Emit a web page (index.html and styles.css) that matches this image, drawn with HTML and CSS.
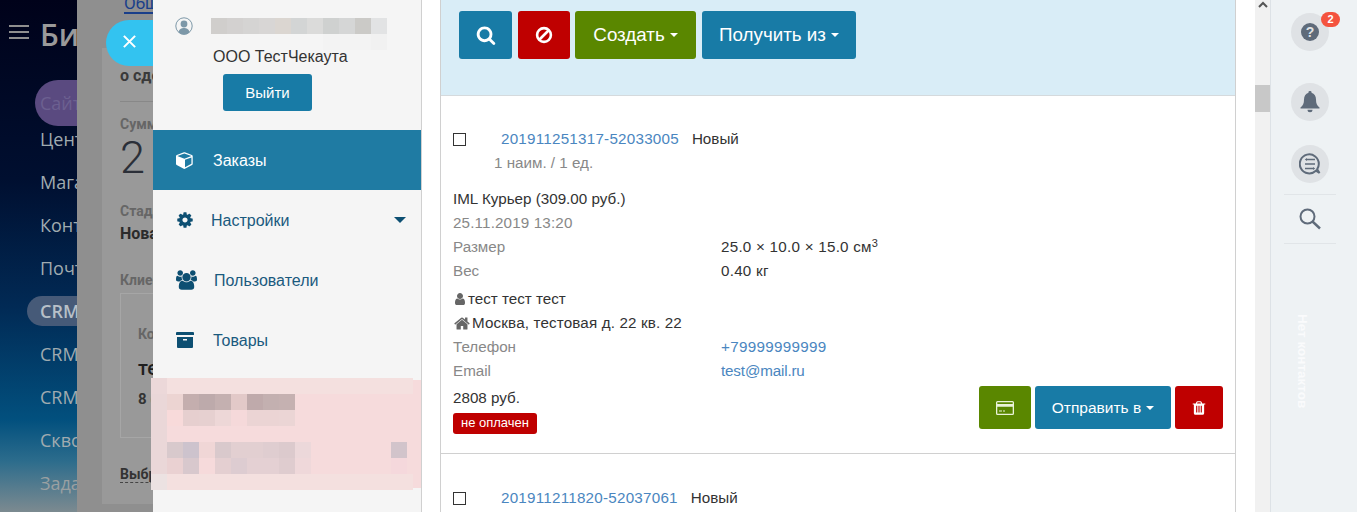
FILE: index.html
```html
<!DOCTYPE html>
<html lang="en">
<head>
    <meta charset="UTF-8">
    <title>Заказы</title>
    <link rel="stylesheet" href="styles.css">
</head>
<body>
    <nav class="portal-nav">
        <div class="portal-head">
            <div class="burger"><span></span><span></span><span></span></div>
            <span class="portal-logo">Битрикс</span>
        </div>
        <div class="portal-pill pill-site">Сайты</div>
        <div class="portal-item">Центр</div>
        <div class="portal-item">Магазин</div>
        <div class="portal-item">Контакты</div>
        <div class="portal-item">Почта</div>
        <div class="portal-item item-current"><span>CRM</span></div>
        <div class="portal-item">CRM</div>
        <div class="portal-item">CRM</div>
        <div class="portal-item">Сквозная</div>
        <div class="portal-item item-dim">Задачи</div>
    </nav>

    <section class="slider">
        <div class="slider-top"><span class="slider-tab">Общие</span></div>
        <div class="slider-body">
            <div class="slider-title">о сделке</div>
            <div class="slider-label label-sum">Сумма</div>
            <div class="slider-sum">2 808</div>
            <div class="slider-label label-stage">Стадия</div>
            <div class="slider-value">Новая</div>
            <div class="slider-label label-client">Клиент</div>
            <div class="slider-card">
                <div class="slider-label">Контакт</div>
                <div class="slider-name">тест</div>
                <div class="slider-phone">8 (999)</div>
            </div>
            <div class="slider-choose"><span>Выбрать</span></div>
        </div>
    </section>

    <button class="close-pill">
        <svg viewBox="0 0 16 16" width="15" height="15"><path d="M2 2l12 12M14 2L2 14" stroke="#fff" stroke-width="2.2"/></svg>
    </button>

    <aside class="sidebar">
        <div class="profile">
            <div class="profile-line">
                <svg class="avatar" viewBox="0 0 18 18" width="18" height="18">
                    <circle cx="9" cy="9" r="8.2" fill="#f5f5f5" stroke="#7d98a8" stroke-width="1"/>
                    <circle cx="9" cy="7" r="3.4" fill="#7d98a8"/>
                    <path d="M3.5 15.5c.5-3.5 3-4.5 5.5-4.5s5 1 5.5 4.5a8 8 0 0 1-11 0z" fill="#7d98a8"/>
                </svg>
                <svg class="mosaic-name" viewBox="0 0 176 32" width="176" height="32">
                    <rect x="0" width="16" height="16" fill="#d0cecc"/><rect x="16" width="16" height="16" fill="#d3d1d0"/>
                    <rect x="32" width="16" height="16" fill="#d5d4d3"/><rect x="48" width="16" height="16" fill="#d8d6d5"/>
                    <rect x="64" width="16" height="16" fill="#dbd6d1"/><rect x="80" width="16" height="16" fill="#d3d5d5"/>
                    <rect x="96" width="16" height="16" fill="#dbdbda"/><rect x="112" width="16" height="16" fill="#cfd1d0"/>
                    <rect x="128" width="16" height="16" fill="#d5d6d6"/><rect x="144" width="16" height="16" fill="#cbcac7"/>
                    <rect x="160" width="16" height="16" fill="#e2e3e4"/>
                    <rect x="112" y="16" width="48" height="16" fill="#f3f3f3"/><rect x="160" y="16" width="16" height="16" fill="#f1f1f1"/>
                </svg>
            </div>
            <div class="company">ООО ТестЧекаута</div>
            <button class="btn btn-blue logout">Выйти</button>
        </div>
        <ul class="menu">
            <li class="menu-item active">
                <svg class="menu-icon" viewBox="0 0 1792 1792" width="18" height="18"><path d="M896 1629l640-349v-636l-640 233v752zm-64-865l698-254-698-254-698 254zm832-252v768q0 35-18 65t-49 47l-704 384q-28 16-61 16t-61-16l-704-384q-31-17-49-47t-18-65v-768q0-40 23-73t61-47l704-256q22-8 44-8t44 8l704 256q38 14 61 47t23 73z" fill="#fff"/><path d="M240 640l592 216v690l-592-320z" fill="#fff"/></svg>
                <span class="menu-text text-orders">Заказы</span>
            </li>
            <li class="menu-item">
                <svg class="menu-icon" viewBox="0 0 1792 1792" width="18" height="18"><path d="M1152 896q0-106-75-181t-181-75-181 75-75 181 75 181 181 75 181-75 75-181zm512-109v222q0 12-8 23t-20 13l-185 28q-19 54-39 91 35 50 107 138 10 12 10 25t-9 23q-27 37-99 108t-94 71q-12 0-26-9l-138-108q-44 23-91 38-16 136-29 186-7 28-36 28h-222q-14 0-24.5-8.5t-11.5-21.5l-28-184q-49-16-90-37l-141 107q-10 9-25 9-14 0-25-11-126-114-165-168-7-10-7-23 0-12 8-23 15-21 51-66.5t54-70.5q-27-50-41-99l-183-27q-13-2-21-12.5t-8-23.5v-222q0-12 8-23t19-13l186-28q14-46 39-92-40-57-107-138-10-12-10-24 0-10 9-23 26-36 98.5-107.5t94.5-71.5q13 0 26 10l138 107q44-23 91-38 16-136 29-186 7-28 36-28h222q14 0 24.5 8.5t11.5 21.5l28 184q49 16 90 37l142-107q9-9 24-9 13 0 25 10 129 119 165 170 7 8 7 22 0 12-8 23-15 21-51 66.5t-54 70.5q26 50 41 98l183 28q13 2 21 12.5t8 23.5z" fill="#0d4f72"/></svg>
                <span class="menu-text text-settings">Настройки</span>
                <span class="menu-caret"></span>
            </li>
            <li class="menu-item">
                <svg class="menu-icon" viewBox="0 0 1920 1792" width="21" height="20"><path d="M593 896q-162 5-265 128h-134q-82 0-138-40.5t-56-118.5q0-353 124-353 6 0 43.5 21t97.5 42.5 119 21.5q67 0 133-23-5 37-5 66 0 139 81 256zm1071 637q0 120-73 189.5t-194 69.5h-874q-121 0-194-69.5t-73-189.5q0-53 3.5-103.5t14-109 26.5-108.5 43-97.5 62-81 85.5-53.5 111.5-20q10 0 43 21.5t73 48 107 48 135 21.5 135-21.5 107-48 73-48 43-21.5q61 0 111.5 20t85.5 53.5 62 81 43 97.5 26.5 108.5 14 109 3.5 103.5zm-1024-1277q0 106-75 181t-181 75-181-75-75-181 75-181 181-75 181 75 75 181zm704 384q0 159-112.5 271.5t-271.5 112.5-271.5-112.5-112.5-271.5 112.5-271.5 271.5-112.5 271.5 112.5 112.5 271.5zm576 225q0 78-56 118.5t-138 40.5h-134q-103-123-265-128 81-117 81-256 0-29-5-66 66 23 133 23 59 0 119-21.5t97.5-42.5 43.5-21q124 0 124 353zm-128-609q0 106-75 181t-181 75-181-75-75-181 75-181 181-75 181 75 75 181z" fill="#0d4f72"/></svg>
                <span class="menu-text text-users">Пользователи</span>
            </li>
            <li class="menu-item">
                <svg class="menu-icon" viewBox="0 0 18 16" width="18" height="16"><path d="M1 0h16a1 1 0 0 1 1 1v2H0V1a1 1 0 0 1 1-1zM1 5h16v10a1 1 0 0 1-1 1H2a1 1 0 0 1-1-1zm6 2v1.5h4V7z" fill="#0d4f72" fill-rule="evenodd"/></svg>
                <span class="menu-text text-goods">Товары</span>
            </li>
        </ul>
    </aside>

    <svg class="mosaic-block" viewBox="0 0 270 115" width="270" height="115">
        <rect x="16" y="2" width="254" height="108" fill="#f6dbdc"/>
        <rect x="0" y="0" width="262" height="16" fill="#f4e0df"/>
        <rect x="0" y="16" width="16" height="80" fill="#ead7d8"/>
        <rect x="0" y="96" width="262" height="16" fill="#f4e0df"/>
        <rect x="0" y="0" width="16" height="16" fill="#ecd8d9"/>
        <rect x="0" y="96" width="16" height="16" fill="#ece2e2"/>
        <g>
            <rect x="16" y="16" width="16" height="16" fill="#ecd4d2"/><rect x="32" y="16" width="16" height="16" fill="#c4aeae"/>
            <rect x="48" y="16" width="16" height="16" fill="#bdaaab"/><rect x="64" y="16" width="16" height="16" fill="#c4b0b0"/>
            <rect x="80" y="16" width="16" height="16" fill="#e2c9c8"/><rect x="96" y="16" width="16" height="16" fill="#bfaaab"/>
            <rect x="112" y="16" width="16" height="16" fill="#c3b0b0"/><rect x="128" y="16" width="16" height="16" fill="#c5b1b1"/>
            <rect x="16" y="32" width="16" height="16" fill="#f8dada"/><rect x="32" y="32" width="16" height="16" fill="#e6cfcf"/>
            <rect x="48" y="32" width="16" height="16" fill="#e6d0d0"/><rect x="64" y="32" width="16" height="16" fill="#edd7d7"/>
            <rect x="80" y="32" width="16" height="16" fill="#f5d9da"/><rect x="96" y="32" width="16" height="16" fill="#ebd4d4"/>
            <rect x="112" y="32" width="16" height="16" fill="#ebd4d4"/><rect x="128" y="32" width="16" height="16" fill="#ebd5d5"/>
            <rect x="16" y="64" width="16" height="16" fill="#d8c9cc"/><rect x="32" y="64" width="16" height="16" fill="#cdc3cd"/>
            <rect x="48" y="64" width="16" height="16" fill="#f0d6d6"/><rect x="64" y="64" width="16" height="16" fill="#d9c9cc"/>
            <rect x="80" y="64" width="16" height="16" fill="#e2cfd1"/><rect x="96" y="64" width="16" height="16" fill="#e2cfd1"/>
            <rect x="112" y="64" width="16" height="16" fill="#dfcdd0"/><rect x="128" y="64" width="16" height="16" fill="#dccacd"/>
            <rect x="144" y="64" width="16" height="16" fill="#ecd8da"/><rect x="240" y="64" width="16" height="16" fill="#d2c4cb"/>
            <rect x="16" y="80" width="16" height="16" fill="#ead1d2"/><rect x="32" y="80" width="16" height="16" fill="#d8c8cd"/>
            <rect x="48" y="80" width="16" height="16" fill="#f6dadb"/><rect x="64" y="80" width="16" height="16" fill="#e4cfd1"/>
            <rect x="80" y="80" width="16" height="16" fill="#ddccd1"/><rect x="96" y="80" width="16" height="16" fill="#e4d0d3"/>
            <rect x="112" y="80" width="16" height="16" fill="#e4d0d3"/><rect x="128" y="80" width="16" height="16" fill="#dfcccf"/>
            <rect x="144" y="80" width="16" height="16" fill="#efd8da"/><rect x="240" y="80" width="16" height="16" fill="#f5d8dc"/>
        </g>
    </svg>

    <main class="content">
        <div class="panel">
            <div class="toolbar">
                <button class="btn btn-blue btn-search">
                    <svg viewBox="0 0 1792 1792" width="20" height="20"><path d="M1216 832q0-185-131.5-316.5t-316.5-131.5-316.5 131.5-131.5 316.5 131.5 316.5 316.5 131.5 316.5-131.5 131.5-316.5zm512 832q0 52-38 90t-90 38q-54 0-90-38l-343-342q-179 124-399 124-143 0-273.5-55.5t-225-150-150-225-55.5-273.5 55.5-273.5 150-225 225-150 273.5-55.5 273.5 55.5 225 150 150 225 55.5 273.5q0 220-124 399l343 343q37 37 37 90z" fill="#fff"/></svg>
                </button>
                <button class="btn btn-red btn-ban">
                    <svg viewBox="0 0 18 18" width="18" height="18"><circle cx="9" cy="9" r="6.9" fill="none" stroke="#fff" stroke-width="2.6"/><path d="M4.500 13.500l9-9" stroke="#fff" stroke-width="2.600"/></svg>
                </button>
                <button class="btn btn-green btn-create">Создать <span class="caret"></span></button>
                <button class="btn btn-blue btn-get">Получить из <span class="caret"></span></button>
            </div>

            <article class="order">
                <div class="order-head">
                    <span class="check"></span>
                    <a class="link order-num">201911251317-52033005</a>
                    <span class="order-status">Новый</span>
                </div>
                <div class="order-count">1 наим. / 1 ед.</div>
                <div class="row row-delivery">IML Курьер (309.00 руб.)</div>
                <div class="row muted row-date">25.11.2019 13:20</div>
                <div class="row"><span class="row-label">Размер</span><span class="row-size">25.0 × 10.0 × 15.0 см<sup>3</sup></span></div>
                <div class="row"><span class="row-label">Вес</span><span class="row-size">0.40 кг</span></div>
                <div class="person person-first">
                    <svg viewBox="0 0 1792 1792" width="14" height="14"><path d="M1536 1399q0 109-62.5 187t-150.5 78h-854q-88 0-150.5-78t-62.5-187q0-85 8.5-160.5t31.5-152 58.5-131 94-89 134.5-34.5q131 128 313 128t313-128q76 0 134.5 34.5t94 89 58.5 131 31.5 152 8.5 160.5zm-256-887q0 159-112.5 271.5t-271.5 112.5-271.5-112.5-112.5-271.5 112.5-271.5 271.5-112.5 271.5 112.5 112.5 271.500z" fill="#666"/></svg>
                    <span>тест тест тест</span>
                </div>
                <div class="person person-home">
                    <svg viewBox="0 0 1792 1792" width="18" height="17"><path d="M1472 992v480q0 26-19 45t-45 19h-384v-384h-256v384h-384q-26 0-45-19t-19-45v-480q0-1 .5-3t.5-3l575-474 575 474q1 2 1 6zm223-69l-62 74q-8 9-21 11h-3q-13 0-21-7l-692-577-692 577q-12 8-24 7-13-2-21-11l-62-74q-8-10-7-23.5t11-21.5l719-599q32-26 76-26t76 26l244 204v-195q0-14 9-23t23-9h192q14 0 23 9t9 23v408l219 182q10 8 11 21.5t-7 23.5z" fill="#666"/></svg>
                    <span>Москва, тестовая д. 22 кв. 22</span>
                </div>
                <div class="row"><span class="row-label">Телефон</span><a class="link link-phone">+79999999999</a></div>
                <div class="row"><span class="row-label">Email</span><a class="link link-mail">test@mail.ru</a></div>
                <div class="order-foot">
                    <div class="order-sum">
                        <div class="price">2808 руб.</div>
                        <span class="badge">не оплачен</span>
                    </div>
                    <div class="order-actions">
                        <button class="btn btn-green btn-pay">
                            <svg viewBox="0 0 18 14" width="18" height="14"><path d="M1.500 0h15A1.500 1.500 0 0 1 18 1.500v11a1.500 1.500 0 0 1-1.500 1.500h-15A1.500 1.500 0 0 1 0 12.500v-11A1.500 1.500 0 0 1 1.500 0zM1.300 1.300v1.700h15.400V1.300zm0 4.400v7h15.400v-7zM3 9.500h3v1H3zm4 0h2v1H7z" fill="#eaf3d8" fill-rule="evenodd"/></svg>
                        </button>
                        <button class="btn btn-blue btn-send">Отправить в <span class="caret"></span></button>
                        <button class="btn btn-red btn-trash">
                            <svg viewBox="0 0 1792 1792" width="16" height="16"><path d="M704 1376v-704q0-14-9-23t-23-9h-64q-14 0-23 9t-9 23v704q0 14 9 23t23 9h64q14 0 23-9t9-23zm256 0v-704q0-14-9-23t-23-9h-64q-14 0-23 9t-9 23v704q0 14 9 23t23 9h64q14 0 23-9t9-23zm256 0v-704q0-14-9-23t-23-9h-64q-14 0-23 9t-9 23v704q0 14 9 23t23 9h64q14 0 23-9t9-23zm-544-992h448l-48-117q-7-9-17-11h-317q-10 2-17 11zm928 32v64q0 14-9 23t-23 9h-96v948q0 83-47 143.5t-113 60.5h-832q-66 0-113-58.5t-47-141.5v-952h-96q-14 0-23-9t-9-23v-64q0-14 9-23t23-9h309l70-167q15-37 54-63t79-26h320q40 0 79 26t54 63l70 167h309q14 0 23 9t9 23z" fill="#fff"/></svg>
                        </button>
                    </div>
                </div>
            </article>

            <article class="order">
                <div class="order-head">
                    <span class="check"></span>
                    <a class="link order-num">201911211820-52037061</a>
                    <span class="order-status">Новый</span>
                </div>
            </article>
        </div>
    </main>

    <div class="scrollbar">
        <svg class="scroll-up" viewBox="0 0 10 7" width="10" height="7"><path d="M1 6l4-4 4 4" fill="none" stroke="#555" stroke-width="2"/></svg>
        <div class="scroll-thumb"></div>
    </div>

    <aside class="rightbar">
        <div class="round-btn round-help">
            <span class="help-mark">?</span>
            <span class="help-count">2</span>
        </div>
        <div class="round-btn round-bell">
            <svg viewBox="0 0 20 22" width="20" height="22"><path d="M10 0a1.500 1.500 0 0 1 1.500 1.800c3 .8 4.500 3.400 4.500 6.700 0 4 1 6 3.500 8v1H.5v-1C3 14.500 4 12.500 4 8.500c0-3.300 1.500-5.900 4.500-6.700A1.500 1.500 0 0 1 10 0zM7.500 18.800h5a2.500 2.500 0 0 1-5 0z" fill="#5f6b7a"/></svg>
        </div>
        <div class="round-btn round-chat">
            <svg viewBox="0 0 22 22" width="22" height="22"><path d="M20.500 20l-3.600-2.300A9.500 9.500 0 1 1 19.800 11c0 2-.6 3.800-1.600 5.200z" fill="none" stroke="#5f6b7a" stroke-width="2"/><path d="M8 6.500h8M6 11h10M6 15.500h8" stroke="#5f6b7a" stroke-width="1.400"/><path d="M8 5v3l-2.200-1.500zM14 14v3l2.200-1.500z" fill="#5f6b7a"/></svg>
        </div>
        <div class="search-row">
            <svg viewBox="0 0 22 22" width="22" height="22"><circle cx="8.500" cy="8.500" r="7" fill="none" stroke="#5f6b7a" stroke-width="2"/><path d="M13.500 13.500l7.500 7" stroke="#5f6b7a" stroke-width="2.400"/></svg>
        </div>
        <div class="no-contacts">Нет контактов</div>
    </aside>
</body>
</html>
```

FILE: styles.css
```css
* {
    box-sizing: border-box;
    margin: 0;
    padding: 0;
}
body {
    font-family: 'Liberation Sans', Arial, sans-serif;
    font-size: 15.2px;
    color: #333333;
    display: flex;
    height: 100vh;
    overflow: hidden;
    position: relative;
    background-color: #FFFFFF;
}
button {
    font-family: inherit;
    border: none;
}

/* dimmed portal menu on the far left */
.portal-nav {
    width: 77px;
    flex: none;
    overflow: hidden;
    white-space: nowrap;
    font-family: 'Open Sans', sans-serif;
    font-size: 18px;
    color: #a0abb0;
    background: linear-gradient(180deg, #00021A 0%, #000F30 35%, #012A55 60%, #02507E 82%, #2C6C8C 90%, #7C8A90 100%);
}
.portal-head {
    display: flex;
    align-items: center;
    height: 68px;
    padding-left: 9px;
}
.burger {
    width: 20px;
    margin-right: 11px;
    flex: none;
}
.burger span {
    display: block;
    height: 2px;
    margin-bottom: 4px;
    background-color: #8f8f8f;
}
.portal-logo {
    font-size: 30px;
    font-weight: 600;
    color: #9a9a9a;
}
.portal-pill {
    height: 46px;
    line-height: 46px;
    margin: 12px 0 -8px 35px;
    padding-left: 5px;
    border-radius: 23px 0 0 23px;
    background-color: #5A4A80;
    color: #6C6090;
}
.portal-item {
    height: 43px;
    line-height: 43px;
    padding-left: 40px;
}
.item-current {
    padding-top: 6px;
}
.item-current span {
    display: block;
    height: 30px;
    line-height: 30px;
    margin-left: -13px;
    padding-left: 13px;
    border-radius: 15px 0 0 15px;
    font-weight: 600;
    background-color: #465A78;
    color: #B8C0C8;
}
.item-dim {
    color: #9aa0a2;
}

/* grey slider behind the sidebar */
.slider {
    width: 76px;
    flex: none;
    overflow: hidden;
    white-space: nowrap;
    background-color: #8F8F8F;
    font-family: 'Roboto', sans-serif;
    color: #333333;
}
.slider-top {
    height: 48px;
    padding-left: 47px;
}
.slider-tab {
    display: block;
    height: 14px;
    line-height: 6px;
    font-size: 17px;
    color: #1A3F8A;
    border-bottom: 2px solid #1A3F8A;
}
.slider-body {
    height: 456px;
    margin-left: 25px;
    padding-left: 18px;
    background-color: #999999;
}
.slider-title {
    height: 54px;
    padding: 18px 0 0;
    font-size: 16px;
    font-weight: 700;
    color: #3a3a3a;
    border-bottom: 1px solid #888888;
}
.slider-label {
    font-size: 14px;
    font-weight: 700;
    color: #666666;
}
.label-sum {
    margin-top: 14px;
}
.slider-sum {
    font-size: 45px;
    line-height: 50px;
    font-weight: 300;
    margin-top: 1px;
    color: #2b2f38;
}
.label-stage {
    margin-top: 20px;
}
.slider-value {
    font-size: 16px;
    font-weight: 700;
    margin-top: 5px;
    color: #2b2b2b;
}
.label-client {
    margin-top: 29px;
}
.slider-card {
    height: 145px;
    margin-top: 5px;
    padding: 32px 0 0 17px;
    border: 1px solid #A6A6A6;
    border-right: none;
}
.slider-name {
    font-size: 20px;
    font-weight: 500;
    margin-top: 14px;
    color: #1f1f1f;
}
.slider-phone {
    font-size: 15px;
    font-weight: 700;
    margin-top: 10px;
}
.slider-choose {
    margin-top: 28px;
    font-size: 14px;
    font-weight: 700;
}
.slider-choose span {
    border-bottom: 1px dashed #444444;
}
.close-pill {
    position: absolute;
    left: 106px;
    top: 20px;
    width: 47px;
    height: 46px;
    padding-right: 1px;
    border-radius: 23px 0 0 23px;
    background-color: #33C3F0;
}

/* orders sidebar */
.sidebar {
    width: 269px;
    flex: none;
    background-color: #F5F5F5;
    border-right: 1px solid #D0D0D0;
}
.profile {
    height: 130px;
    padding-top: 17px;
}
.profile-line {
    display: flex;
    height: 32px;
    padding-left: 22px;
}
.avatar {
    flex: none;
}
.mosaic-name {
    flex: none;
    margin: 1px 0 0 18px;
}
.company {
    margin: 0 0 0 60px;
    line-height: 16px;
    font-size: 16px;
    color: #333333;
}
.logout {
    display: block;
    width: 89px;
    height: 37px;
    margin: 9px 0 0 70px;
    font-size: 15px;
    color: #FFFFFF;
}
.menu {
    list-style: none;
}
.menu-item {
    display: flex;
    align-items: center;
    height: 60px;
    padding-left: 23px;
    color: #1A5A7E;
    font-size: 16px;
    position: relative;
}
.menu-item.active {
    background-color: #1F7BA3;
    color: #FFFFFF;
}
.menu-icon {
    flex: none;
}
.menu-text {
    padding-top: 2px;
}
.text-orders {
    margin-left: 19px;
}
.text-settings {
    margin-left: 17px;
}
.text-users {
    margin-left: 17px;
}
.text-goods {
    margin-left: 19px;
}
.menu-caret {
    margin-left: auto;
    margin-right: 15px;
    border-left: 6px solid transparent;
    border-right: 6px solid transparent;
    border-top: 6px solid #0D4F72;
}
.mosaic-block {
    position: absolute;
    left: 151px;
    top: 378px;
}

/* main column with orders */
.content {
    width: 833px;
    flex: none;
    padding-left: 18px;
    overflow: hidden;
}
.panel {
    width: 796px;
    height: 100%;
    border-left: 1px solid #D0D0D0;
    border-right: 1px solid #D0D0D0;
}
.toolbar {
    display: flex;
    align-items: flex-start;
    height: 96px;
    padding: 11px 0 0 18px;
    background-color: #D9EDF7;
    border-bottom: 1px solid #D5DADD;
}
.btn {
    display: inline-flex;
    align-items: center;
    justify-content: center;
    border-radius: 3px;
    color: #FFFFFF;
    white-space: nowrap;
}
.btn-blue {
    background-color: #187BA6;
}
.btn-red {
    background-color: #BF0000;
}
.btn-green {
    background-color: #5A8700;
}
.toolbar .btn {
    height: 48px;
    font-size: 18.8px;
}
.btn-search {
    width: 53px;
}
.btn-ban {
    width: 52px;
    margin-left: 6px;
}
.btn-create {
    width: 121px;
    margin-left: 5px;
}
.btn-get {
    width: 154px;
    margin-left: 6px;
}
.caret {
    display: inline-block;
    margin-left: 5px;
    border-left: 4px solid transparent;
    border-right: 4px solid transparent;
    border-top: 4px solid #FFFFFF;
}
.order {
    padding: 24px 12px 0;
    border-bottom: 1px solid #D0D0D0;
}
.order:last-child {
    border-bottom: none;
    padding-top: 25px;
}
.order-head {
    display: flex;
    align-items: center;
    height: 24px;
    line-height: 24px;
    margin-top: 7px;
}
.check {
    width: 13px;
    height: 13px;
    border: 1px solid #333333;
    flex: none;
}
.link {
    color: #4A86C0;
}
.order-num {
    margin-left: 35px;
    letter-spacing: 0.24px;
}
.link-phone {
    letter-spacing: 0.3px;
}
.link-mail {
    letter-spacing: -0.15px;
}
.order-status {
    margin-left: 13px;
}
.order-count {
    line-height: 24px;
    margin-left: 41px;
    color: #888888;
}
.row {
    display: flex;
    line-height: 24px;
    height: 24px;
}
.row-delivery {
    margin-top: 12px;
}
.row-date {
    letter-spacing: 0.15px;
}
.row-size {
    letter-spacing: 0.25px;
}
.muted {
    color: #888888;
}
.row-label {
    width: 268px;
    flex: none;
    color: #888888;
}
.row sup {
    font-size: 11px;
    line-height: 0;
    position: relative;
    top: 1px;
}
.person {
    display: flex;
    align-items: center;
    gap: 1px;
    height: 24px;
    line-height: 24px;
}
.person-first {
    margin-top: 4px;
}
.person-home span {
    letter-spacing: 0.15px;
}
.person svg {
    flex: none;
}
.order-foot {
    display: flex;
    justify-content: space-between;
    height: 67px;
    margin-top: 3px;
}
.price {
    line-height: 24px;
}
.badge {
    display: block;
    width: 84px;
    height: 21px;
    line-height: 20px;
    margin-top: 3px;
    border-radius: 3px;
    text-align: center;
    font-size: 13px;
    color: #FFFFFF;
    background-color: #BF0000;
}
.order-actions {
    display: flex;
    gap: 4px;
}
.order-actions .btn {
    height: 43px;
    font-size: 15.5px;
}
.btn-pay {
    width: 52px;
}
.btn-send {
    width: 136px;
}
.btn-trash {
    width: 48px;
}

/* page scrollbar */
.scrollbar {
    width: 15px;
    flex: none;
    padding-top: 1px;
    background-color: #F1F1F1;
}
.scroll-up {
    display: block;
    margin: 0 auto;
}
.scroll-thumb {
    height: 27px;
    margin-top: 77px;
    background-color: #C8C8C8;
}

/* right bar with widgets */
.rightbar {
    flex: 1;
    display: flex;
    flex-direction: column;
    align-items: center;
    padding: 13px 8px 0 0;
    background-color: #EEF2F4;
    border-left: 1px solid #DDE2E6;
}
.round-btn {
    width: 38px;
    height: 38px;
    flex: none;
    display: flex;
    align-items: center;
    justify-content: center;
    border-radius: 50%;
    background-color: #DFE2E5;
    position: relative;
}
.round-bell {
    margin-top: 32px;
}
.round-chat {
    margin-top: 24px;
}
.help-mark {
    width: 18px;
    height: 18px;
    line-height: 18px;
    border-radius: 50%;
    text-align: center;
    font-size: 14px;
    font-weight: 700;
    color: #DFE2E5;
    background-color: #5F6B7A;
}
.help-count {
    position: absolute;
    left: 30px;
    top: -1px;
    width: 19px;
    height: 15px;
    line-height: 15px;
    border-radius: 8px;
    text-align: center;
    font-size: 11px;
    font-weight: 700;
    color: #FFFFFF;
    background-color: #F4533E;
}
.search-row {
    display: flex;
    align-items: center;
    justify-content: center;
    width: 52px;
    height: 50px;
    margin-top: 11px;
    border-top: 1px solid #E1E5E8;
    border-bottom: 1px solid #E1E5E8;
}
.no-contacts {
    margin: 70px 15px 0 0;
    writing-mode: vertical-rl;
    font-size: 13.5px;
    font-weight: 700;
    color: #FAFBFC;
}
```
